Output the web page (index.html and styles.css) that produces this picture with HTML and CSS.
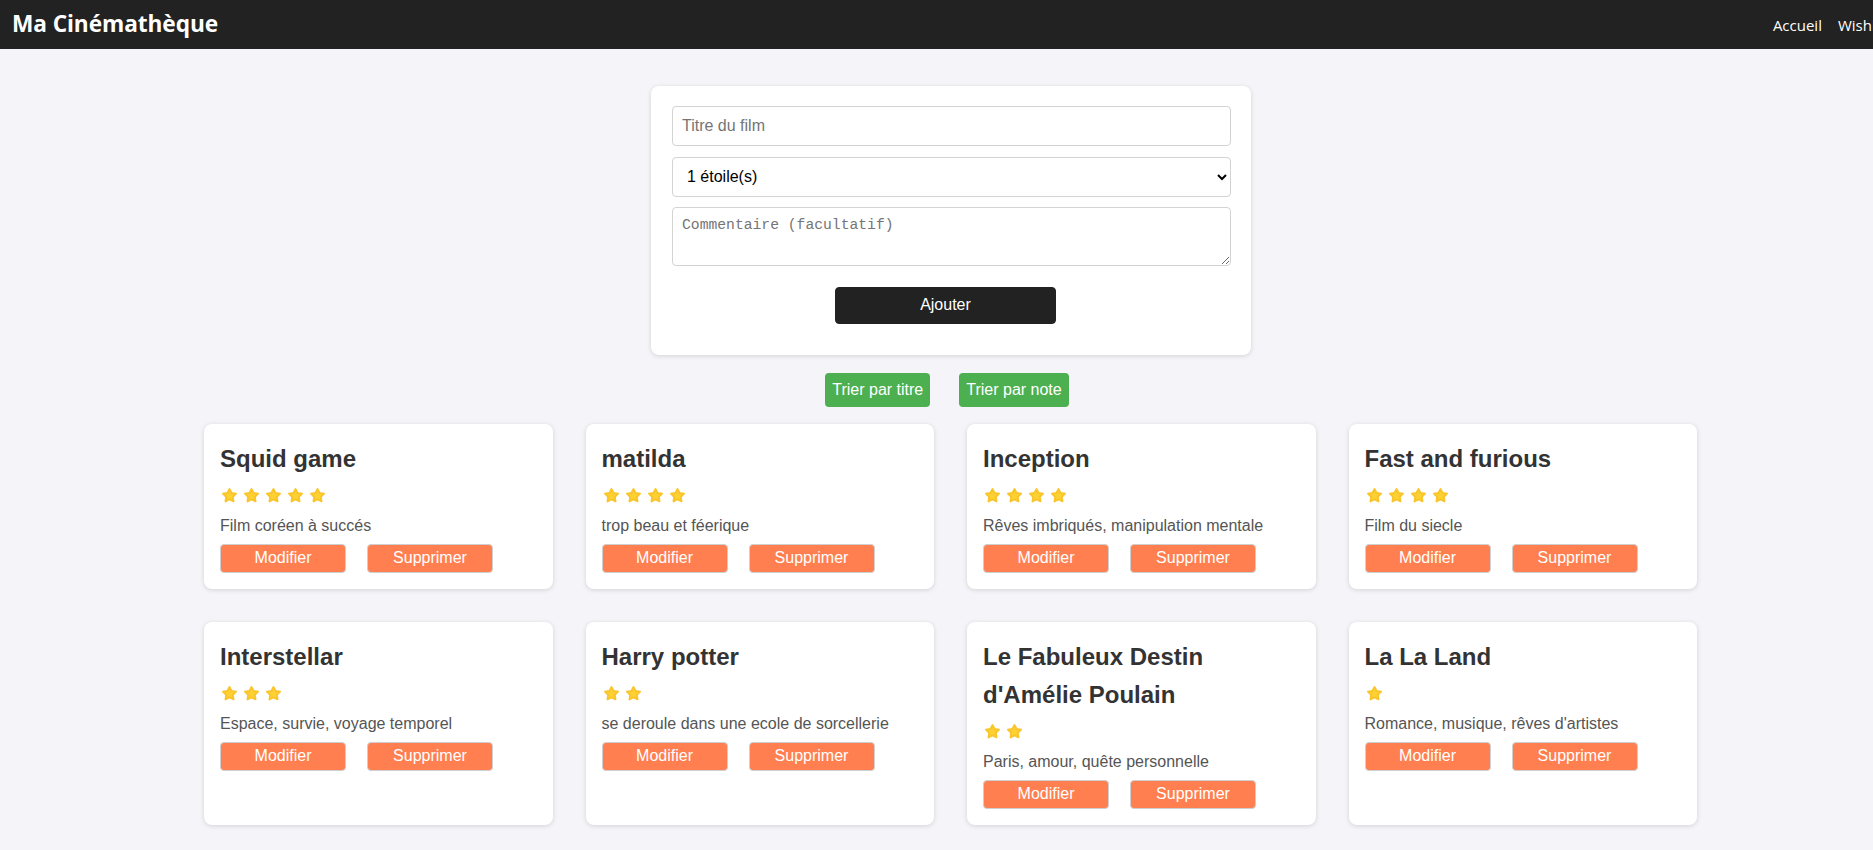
FILE: index.html
```html
<!DOCTYPE html>
<html lang="fr">
<head>
<meta charset="utf-8">
<title>Ma Cinémathèque</title>
<link rel="stylesheet" href="styles.css">
</head>
<body>
<svg width="0" height="0" class="defs" aria-hidden="true">
  <symbol id="star" viewBox="0 0 24 24">
    <polygon points="12,2.8 14.94,8.45 21.3,9.41 16.76,14.05 17.7,20.4 12,17.5 6.3,20.4 7.24,14.05 2.7,9.41 9.06,8.45" fill="#fdd033" stroke="#f9c52a" stroke-width="2.6" stroke-linejoin="round"/>
  </symbol>
</svg>
<header class="topbar">
  <h1 class="brand">Ma Cinémathèque</h1>
  <nav class="nav">
    <a href="#">Accueil</a>
    <a href="#">Wishlist</a>
  </nav>
</header>

<main class="main">
  <form class="add-form">
    <input class="field" type="text" placeholder="Titre du film">
    <select class="field select">
      <option>1 étoile(s)</option>
      <option>2 étoile(s)</option>
      <option>3 étoile(s)</option>
      <option>4 étoile(s)</option>
      <option>5 étoile(s)</option>
    </select>
    <textarea class="field area" placeholder="Commentaire (facultatif)"></textarea>
    <button type="button" class="add-btn">Ajouter</button>
  </form>

  <div class="sorts">
    <button class="sort-btn" type="button">Trier par titre</button>
    <button class="sort-btn" type="button">Trier par note</button>
  </div>

  <section class="grid">
    <article class="card">
      <h2 class="title">Squid game</h2>
      <div class="stars"><svg><use href="#star"/></svg><svg><use href="#star"/></svg><svg><use href="#star"/></svg><svg><use href="#star"/></svg><svg><use href="#star"/></svg></div>
      <p class="desc">Film coréen à succés</p>
      <div class="actions"><button class="act">Modifier</button><button class="act">Supprimer</button></div>
    </article>
    <article class="card">
      <h2 class="title">matilda</h2>
      <div class="stars"><svg><use href="#star"/></svg><svg><use href="#star"/></svg><svg><use href="#star"/></svg><svg><use href="#star"/></svg></div>
      <p class="desc">trop beau et féerique</p>
      <div class="actions"><button class="act">Modifier</button><button class="act">Supprimer</button></div>
    </article>
    <article class="card">
      <h2 class="title">Inception</h2>
      <div class="stars"><svg><use href="#star"/></svg><svg><use href="#star"/></svg><svg><use href="#star"/></svg><svg><use href="#star"/></svg></div>
      <p class="desc">Rêves imbriqués, manipulation mentale</p>
      <div class="actions"><button class="act">Modifier</button><button class="act">Supprimer</button></div>
    </article>
    <article class="card">
      <h2 class="title">Fast and furious</h2>
      <div class="stars"><svg><use href="#star"/></svg><svg><use href="#star"/></svg><svg><use href="#star"/></svg><svg><use href="#star"/></svg></div>
      <p class="desc">Film du siecle</p>
      <div class="actions"><button class="act">Modifier</button><button class="act">Supprimer</button></div>
    </article>
    <article class="card">
      <h2 class="title">Interstellar</h2>
      <div class="stars"><svg><use href="#star"/></svg><svg><use href="#star"/></svg><svg><use href="#star"/></svg></div>
      <p class="desc">Espace, survie, voyage temporel</p>
      <div class="actions"><button class="act">Modifier</button><button class="act">Supprimer</button></div>
    </article>
    <article class="card">
      <h2 class="title">Harry potter</h2>
      <div class="stars"><svg><use href="#star"/></svg><svg><use href="#star"/></svg></div>
      <p class="desc">se deroule dans une ecole de sorcellerie</p>
      <div class="actions"><button class="act">Modifier</button><button class="act">Supprimer</button></div>
    </article>
    <article class="card">
      <h2 class="title">Le Fabuleux Destin d'Amélie Poulain</h2>
      <div class="stars"><svg><use href="#star"/></svg><svg><use href="#star"/></svg></div>
      <p class="desc">Paris, amour, quête personnelle</p>
      <div class="actions"><button class="act">Modifier</button><button class="act">Supprimer</button></div>
    </article>
    <article class="card">
      <h2 class="title">La La Land</h2>
      <div class="stars"><svg><use href="#star"/></svg></div>
      <p class="desc">Romance, musique, rêves d'artistes</p>
      <div class="actions"><button class="act">Modifier</button><button class="act">Supprimer</button></div>
    </article>
  </section>
</main>
</body>
</html>
```
FILE: styles.css
```css
html, body {
  overflow-x: hidden;
}
body {
  margin: 0;
  background: #f4f4f9;
  font-family: "Liberation Sans", Arial, sans-serif;
  line-height: 1.6;
  color: #333;
}
.defs {
  position: absolute;
  width: 0;
  height: 0;
}

/* header */
.topbar {
  height: 49px;
  background: #222;
  color: #fff;
  display: flex;
  align-items: center;
  justify-content: space-between;
  padding-left: 12px;
}
.brand {
  margin: 0;
  font-family: "Open Sans", "Noto Sans", sans-serif;
  font-size: 22.7px;
  font-weight: 700;
  line-height: 1;
  letter-spacing: -0.1px;
}
.nav {
  display: flex;
  gap: 16px;
  margin-right: -19px;
  flex-shrink: 0;
}
.nav a {
  color: #fff;
  text-decoration: none;
  font-family: "Open Sans", "Noto Sans", sans-serif;
  font-size: 15px;
}

/* form */
.main {
  padding-top: 37px;
  padding-bottom: 30px;
}
.add-form {
  box-sizing: border-box;
  width: 600px;
  margin-left: calc(50% - 285.5px);
  background: #fff;
  border-radius: 8px;
  box-shadow: 0 1px 5px rgba(0, 0, 0, 0.14);
  padding: 20px 20px 31px 21px;
  display: flex;
  flex-direction: column;
  gap: 10.5px;
}
.field {
  box-sizing: border-box;
  width: 100%;
  border: 1px solid #d3d3d3;
  border-radius: 4px;
  background: #fff;
  font-family: "Liberation Sans", Arial, sans-serif;
  font-size: 16px;
  color: #000;
  margin: 0;
}
input.field {
  height: 40px;
  padding: 0 9px;
}
input.field::placeholder {
  color: #757575;
}
.select {
  height: 40px;
  padding: 0 10px;
}
.area {
  height: 59px;
  padding: 8px 9px;
  font-family: "Liberation Mono", "DejaVu Sans Mono", monospace;
  font-size: 14.7px;
  line-height: 1.3;
  resize: vertical;
}
.area::placeholder {
  color: #757575;
}
.add-btn {
  align-self: flex-start;
  margin-top: 10px;
  margin-left: 163px;
  width: 221px;
  height: 37px;
  background: #222;
  color: #fff;
  border: 1px solid #222;
  border-radius: 4px;
  font-family: "Liberation Sans", Arial, sans-serif;
  font-size: 16px;
}

/* sort */
.sorts {
  display: flex;
  justify-content: center;
  gap: 29px;
  padding-left: 21px;
  margin-top: 18px;
}
.sort-btn {
  height: 34px;
  padding: 0 7px;
  background: #4caf50;
  color: #fff;
  border: none;
  border-radius: 4px;
  font-family: "Liberation Sans", Arial, sans-serif;
  font-size: 16px;
}

/* grid */
.grid {
  width: 1493px;
  margin-left: calc(50% - 732.5px);
  margin-top: 17px;
  display: grid;
  grid-template-columns: repeat(4, 1fr);
  gap: 33px;
}
.card {
  background: #fff;
  border-radius: 8px;
  box-shadow: 0 1px 5px rgba(0, 0, 0, 0.14);
  padding: 16px;
}
.title {
  margin: 0;
  font-size: 24px;
  font-weight: 700;
  line-height: 38.4px;
  color: #333;
}
.stars {
  height: 35px;
  display: flex;
  align-items: center;
  gap: 5px;
  margin-left: 1px;
}
.stars svg {
  width: 17px;
  height: 17px;
}
.desc {
  margin: 0;
  font-size: 16px;
  line-height: 25.6px;
  color: #555;
}
.actions {
  margin-top: 5px;
  display: flex;
  gap: 21px;
}
.act {
  width: 126px;
  height: 29px;
  background: #ff7f50;
  color: #fff;
  border: 1px solid #cfcfcf;
  border-radius: 4px;
  font-family: "Liberation Sans", Arial, sans-serif;
  font-size: 16px;
  padding: 0;
}
```
